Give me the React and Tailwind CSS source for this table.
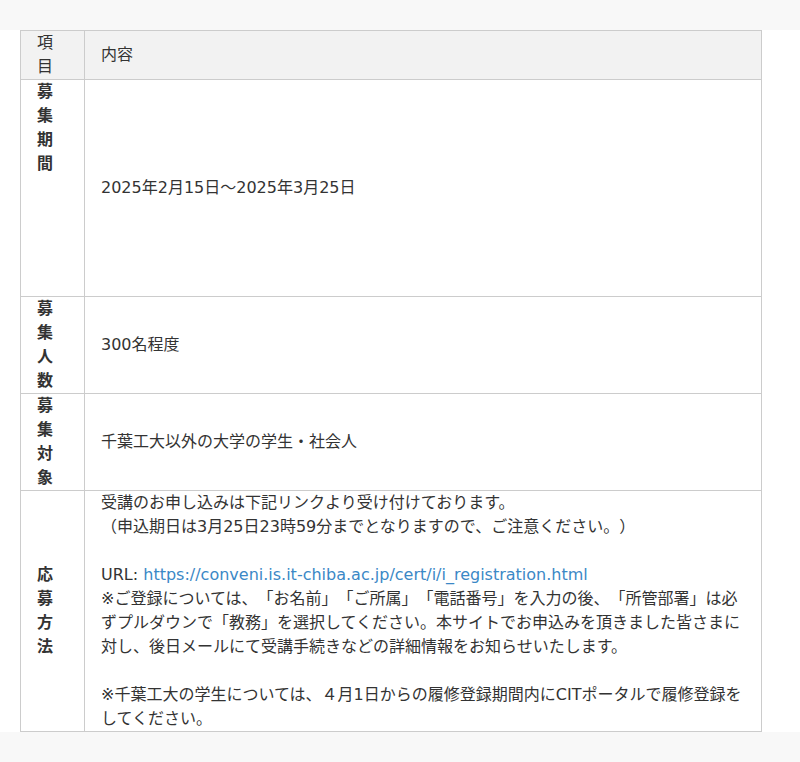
const font = { fontFamily: '"DejaVu Sans", "Noto Sans CJK JP", sans-serif' };

const Label = ({ text }) => (
  <span className="block font-bold">
    {text.split("").map((c, i) => (
      <span key={i} className="block">{c}</span>
    ))}
  </span>
);

export default function App() {
  return (
    <div
      className="min-h-[762px] bg-[#f8f8f8] pt-[30px] text-[16px] leading-[24px] text-[#333] [text-spacing-trim:space-all]"
      style={font}
    >
      <div className="bg-white px-[20px] pr-[38px]">
        <table className="w-[742px] border-collapse border border-[#cccccc]">
          <thead>
            <tr className="bg-[#f2f2f2]">
              <th className="w-[64px] border border-[#cccccc] px-[16px] py-0 text-left align-middle font-normal">
                <span className="block">項</span>
                <span className="block">目</span>
              </th>
              <th className="border border-[#cccccc] px-[16px] py-0 text-left align-middle font-normal">内容</th>
            </tr>
          </thead>
          <tbody>
            <tr>
              <td className="border border-[#cccccc] px-[16px] py-0 align-top">
                <div className="h-[216px]">
                  <Label text="募集期間" />
                </div>
              </td>
              <td className="border border-[#cccccc] px-[16px] py-0 align-middle">2025年2月15日～2025年3月25日</td>
            </tr>
            <tr>
              <td className="border border-[#cccccc] px-[16px] py-0 align-middle">
                <Label text="募集人数" />
              </td>
              <td className="border border-[#cccccc] px-[16px] py-0 align-middle">300名程度</td>
            </tr>
            <tr>
              <td className="border border-[#cccccc] px-[16px] py-0 align-middle">
                <Label text="募集対象" />
              </td>
              <td className="border border-[#cccccc] px-[16px] py-0 align-middle">千葉工大以外の大学の学生・社会人</td>
            </tr>
            <tr>
              <td className="border border-[#cccccc] px-[16px] py-0 align-middle">
                <Label text="応募方法" />
              </td>
              <td className="border border-[#cccccc] px-[16px] py-0 align-middle">
                受講のお申し込みは下記リンクより受け付けております。
                <br />
                （申込期日は3月25日23時59分までとなりますので、ご注意ください。）
                <br />
                <br />
                URL:{" "}
                <a href="#" className="text-[#3b88c6]">
                  https://conveni.is.it-chiba.ac.jp/cert/i/i_registration.html
                </a>
                <br />
                ※ご登録については、「お名前」「ご所属」「電話番号」を入力の後、「所管部署」は必ずプルダウンで「教務」を選択してください。本サイトでお申込みを頂きました皆さまに対し、後日メールにて受講手続きなどの詳細情報をお知らせいたします。
                <br />
                <br />
                ※千葉工大の学生については、４月1日からの履修登録期間内にCITポータルで履修登録をしてください。
              </td>
            </tr>
          </tbody>
        </table>
      </div>
    </div>
  );
}
